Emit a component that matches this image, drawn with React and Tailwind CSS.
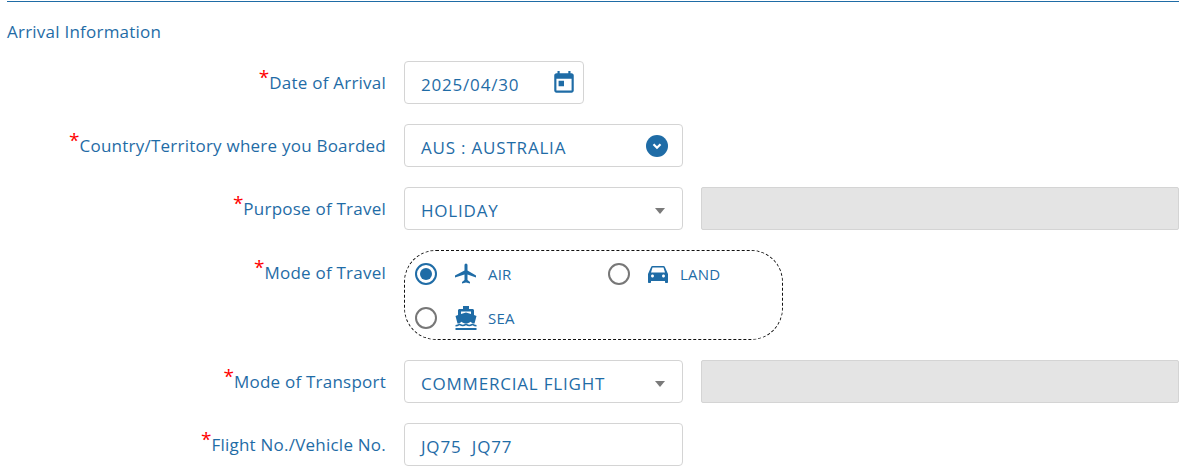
import React from "react";

const blue = "text-[#1f6ca6]";

function Label({ children }) {
  return (
    <div className={`w-[386px] shrink-0 pt-[1px] text-right text-[17px] leading-[24px] tracking-[0.23px] ${blue}`}>
      <span className="relative top-[-5px] text-[19px] leading-none tracking-normal text-[#ff0000]">*</span>
      {children}
    </div>
  );
}

function Field({ className = "", children }) {
  return (
    <div className={`flex h-[43px] items-center rounded-[4px] border border-[#d4d4d4] bg-white pl-[16px] pt-[4px] text-[17px] tracking-[0.8px] ${blue} ${className}`}>
      {children}
    </div>
  );
}

function Caret() {
  return <div className="ml-auto mr-[17px] h-0 w-0 border-x-[5px] border-t-[6px] border-x-transparent border-t-[#7a7a7a]" />;
}

function Radio({ on }) {
  return (
    <div className={`flex h-[22px] w-[22px] shrink-0 items-center justify-center rounded-full border-[2.5px] ${on ? "border-[#1f6ca6]" : "border-[#777777]"}`}>
      {on && <div className="h-[12px] w-[12px] rounded-full bg-[#1f6ca6]" />}
    </div>
  );
}

function Plane() {
  return (
    <svg width="24" height="24" viewBox="0 0 24 24" fill="#1f6ca6">
      <path d="M22 15.500v-2l-8.500-5V3.200C13.500 2.400 12.800 1.500 12 1.500s-1.500.9-1.500 1.700v5.300L1 13.500v2l9.500-3v5.600L8 20v1.500l4-1 4 1V20l-2.500-1.900v-5.600z" />
    </svg>
  );
}

function Car() {
  return (
    <svg width="24" height="24" viewBox="0 0 24 24" fill="#1f6ca6">
      <path d="M18.900 5c-.2-.6-.8-1-1.400-1H6.500c-.7 0-1.200.4-1.400 1L2 12v8c0 .6.400 1 1 1h1c.6 0 1-.4 1-1v-1h14v1c0 .6.400 1 1 1h1c.6 0 1-.4 1-1v-8zM6.500 15.500C5.700 15.500 5 14.800 5 14s.7-1.500 1.500-1.500S8 13.200 8 14s-.7 1.500-1.500 1.500zm11 0c-.8 0-1.500-.7-1.500-1.500s.7-1.500 1.500-1.500 1.500.7 1.500 1.500-.7 1.500-1.500 1.500zM5 10.500 6.500 5.500h11l1.500 5z" />
    </svg>
  );
}

function Ship() {
  return (
    <svg width="24" height="26" viewBox="0 0 24 26" fill="#1f6ca6">
      <path d="M9 1h6v3h3.500c.8 0 1.500.7 1.500 1.500V10l2.500 1-2 7.500c-1.500 0-2.800-.7-4-1.800-1.200 1.100-3 1.800-4.500 1.800s-3.300-.7-4.500-1.800c-1.200 1.100-2.500 1.800-4 1.800l-2-7.500L4 10V5.500C4 4.700 4.700 4 5.500 4H9zM7 6.500v2.400L12 7.400l5 1.500V6.500z" />
      <path d="M1.500 20c1.500 0 2.800-.5 4-1.400 1.900 1.500 4.600 1.500 6.500 0 1.900 1.500 4.600 1.500 6.500 0 1.200.9 2.500 1.400 4 1.400v1.500c-1.400 0-2.800-.4-4-1.200-2 1.300-4.500 1.300-6.500 0-2 1.300-4.500 1.300-6.500 0-1.200.8-2.600 1.200-4 1.200z" />
      <rect x="1.500" y="23" width="21" height="2" />
    </svg>
  );
}

function Option({ on, icon, label, className = "", iconGap = "ml-[17px]" }) {
  return (
    <div className={`flex items-center ${className}`}>
      <Radio on={on} />
      <div className={`${iconGap} flex w-[24px] justify-center`}>{icon}</div>
      <span className={`ml-[10px] pt-[1px] text-[15px] tracking-[0.2px] ${blue}`}>{label}</span>
    </div>
  );
}

export default function App() {
  return (
    <div className="h-[466px] w-[1200px] overflow-hidden bg-white" style={{ fontFamily: '"Open Sans", sans-serif' }}>
      <div className="ml-[7px] mr-[21px] mt-[1px] h-px bg-[#1f6ca6]" />
      <div className={`mt-[19px] h-[22px] pl-[7px] text-[17px] leading-[22px] tracking-[0.23px] ${blue}`}>Arrival Information</div>

      <div className="mt-[18px] flex items-center">
        <Label>Date of Arrival</Label>
        <Field className="ml-[18px] w-[180px]">
          <span>2025/04/30</span>
          <svg className="ml-auto mr-[6px] mt-[-4px]" width="26" height="26" viewBox="0 0 24 24" fill="#1f6ca6">
            <path d="M19 3h-1V1h-2v2H8V1H6v2H5c-1.100 0-2 .9-2 2v14c0 1.100.9 2 2 2h14c1.100 0 2-.9 2-2V5c0-1.100-.9-2-2-2zm0 16H5V8h14zM7 10h5v5H7z" />
          </svg>
        </Field>
      </div>

      <div className="mt-[20px] flex items-center">
        <Label>Country/Territory where you Boarded</Label>
        <Field className="ml-[18px] w-[279px]">
          <span>AUS : AUSTRALIA</span>
          <div className="ml-auto mr-[14px] mt-[-4px] flex h-[22px] w-[22px] items-center justify-center rounded-full bg-[#1f6ca6]">
            <svg width="12" height="12" viewBox="0 0 12 12" fill="none" stroke="white" strokeWidth="2.200">
              <path d="M2.500 4.200 6 7.700l3.500-3.500" />
            </svg>
          </div>
        </Field>
      </div>

      <div className="mt-[20px] flex items-center">
        <Label>Purpose of Travel</Label>
        <Field className="ml-[18px] w-[279px]">
          <span>HOLIDAY</span>
          <Caret />
        </Field>
        <div className="ml-[18px] h-[43px] w-[478px] rounded-[2px] border border-[#d4d4d4] bg-[#e4e4e4]" />
      </div>

      <div className="mt-[20px] flex items-start">
        <div className="mt-[10px]">
          <Label>Mode of Travel</Label>
        </div>
        <div className="ml-[18px] h-[90px] w-[379px] rounded-[32px] border border-dashed border-[#111111] pl-[10px] pt-[11px]">
          <div className="flex h-[24px]">
            <Option on icon={<Plane />} label="AIR" className="w-[193px]" />
            <Option icon={<Car />} label="LAND" iconGap="ml-[16px]" />
          </div>
          <Option icon={<Ship />} label="SEA" className="mt-[20px] h-[24px]" />
        </div>
      </div>

      <div className="mt-[20px] flex items-center">
        <Label>Mode of Transport</Label>
        <Field className="ml-[18px] w-[279px]">
          <span>COMMERCIAL FLIGHT</span>
          <Caret />
        </Field>
        <div className="ml-[18px] h-[43px] w-[478px] rounded-[2px] border border-[#d4d4d4] bg-[#e4e4e4]" />
      </div>

      <div className="mt-[20px] flex items-center">
        <Label>Flight No./Vehicle No.</Label>
        <Field className="ml-[18px] w-[279px] whitespace-pre">
          <span>JQ75  JQ77</span>
        </Field>
      </div>
    </div>
  );
}
